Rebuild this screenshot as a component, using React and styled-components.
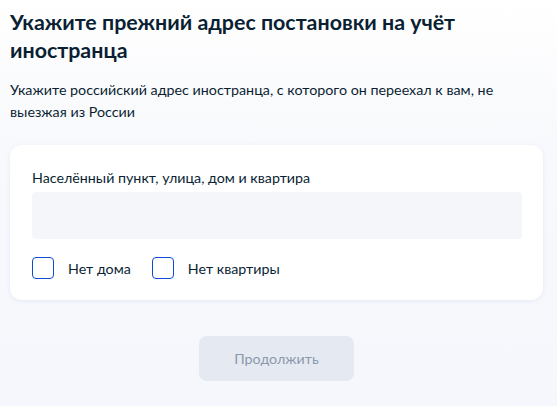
import React from "react";
import styled, { createGlobalStyle } from "styled-components";

const GlobalStyle = createGlobalStyle`
  html, body {
    margin: 0;
    padding: 0;
  }
  body {
    font-family: Lato, "Noto Sans", sans-serif;
    color: #0b1f33;
    background: linear-gradient(180deg, #ffffff 0px, #f8f9fc 140px, #f5f7fc 406px);
    min-height: 406px;
  }
`;

const Page = styled.div`
  padding: 8px 14px 24px 10px;
  min-height: 406px;
  box-sizing: border-box;
`;

const Title = styled.h1`
  margin: 0;
  font-size: 21.4px;
  line-height: 28px;
  font-weight: 700;
  color: #0b1f33;
`;

const Lead = styled.p`
  margin: 15px 0 0;
  max-width: 500px;
  font-size: 14.3px;
  line-height: 22px;
  color: #0b1f33;
`;

const Card = styled.div`
  margin-top: 22px;
  background: #fff;
  border-radius: 12px;
  box-shadow: 0 1px 4px rgba(150, 170, 210, 0.18);
  padding: 24px 21px 21px 22px;
`;

const FieldLabel = styled.label`
  display: block;
  font-size: 14.25px;
  line-height: 18px;
`;

const Input = styled.div`
  margin-top: 5px;
  height: 47px;
  background: #f5f6fa;
  border-radius: 4px;
`;

const Options = styled.div`
  display: flex;
  gap: 21px;
  margin-top: 18px;
`;

const Option = styled.label`
  display: flex;
  align-items: center;
  gap: 14px;
  font-size: 14.25px;
  line-height: 21px;
  color: #0b1f33;
`;

const Box = styled.span`
  width: 22px;
  height: 22px;
  box-sizing: border-box;
  border: 1.5px solid #0d4cd3;
  border-radius: 4px;
  background: #fff;
`;

const Actions = styled.div`
  display: flex;
  justify-content: center;
  margin-top: 36px;
`;

const Button = styled.button`
  width: 155px;
  height: 45px;
  border: 0;
  border-radius: 8px;
  background: #e4e9f2;
  color: #8d99ab;
  font-family: Lato, "Noto Sans", sans-serif;
  font-size: 14.25px;
  margin-right: 0;
`;

export default function App() {
  return (
    <>
      <GlobalStyle />
      <Page>
        <Title>Укажите прежний адрес постановки на учёт иностранца</Title>
        <Lead>
          Укажите российский адрес иностранца, с которого он переехал к вам, не
          выезжая из России
        </Lead>
        <Card>
          <FieldLabel>Населённый пункт, улица, дом и квартира</FieldLabel>
          <Input />
          <Options>
            <Option>
              <Box />
              Нет дома
            </Option>
            <Option>
              <Box />
              Нет квартиры
            </Option>
          </Options>
        </Card>
        <Actions>
          <Button disabled>Продолжить</Button>
        </Actions>
      </Page>
    </>
  );
}
